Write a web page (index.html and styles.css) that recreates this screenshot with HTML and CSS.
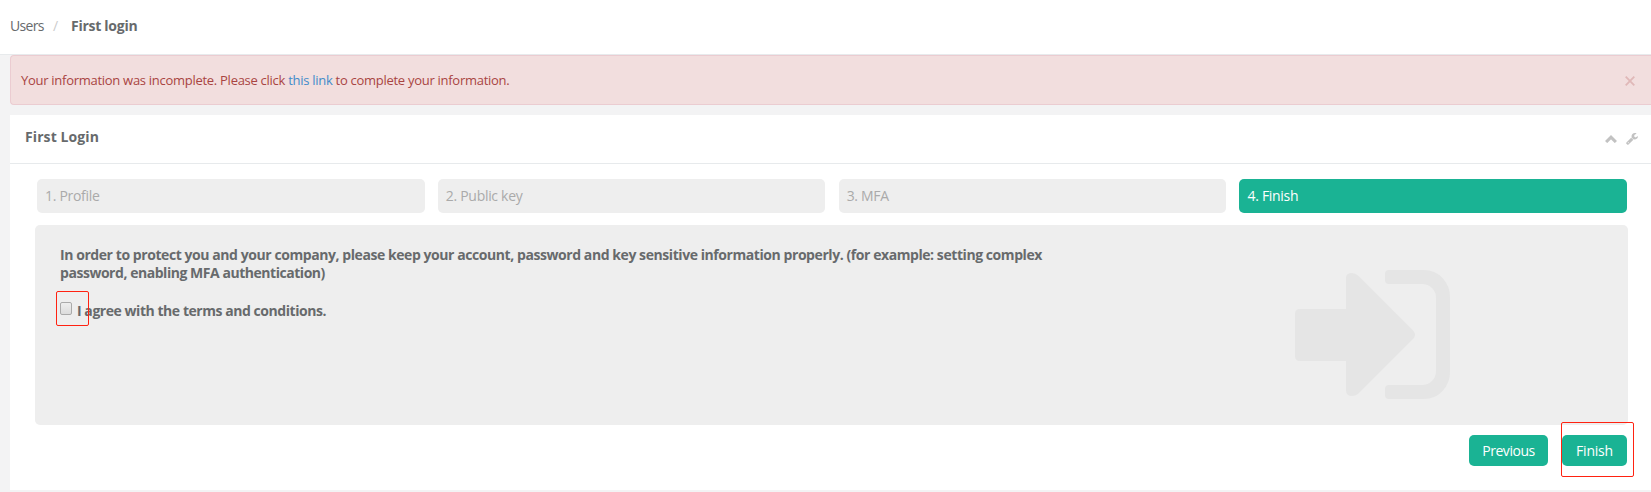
FILE: index.html
```html
<!DOCTYPE html>
<html lang="en">
<head>
<meta charset="utf-8">
<title>First login</title>
<link rel="stylesheet" href="styles.css">
</head>
<body>
<nav class="breadcrumb"><span class="crumb">Users</span><span class="sep">/</span><strong class="current">First login</strong></nav>
<main class="content">
  <div class="alert"><p class="alert-text">Your information was incomplete. Please click <a class="link">this link</a> to complete your information.</p>
    <svg class="close" viewBox="0 0 10 10"><path d="M.7 .7L9.3 9.3M9.3 .7L.7 9.3"/></svg>
  </div>
  <section class="card">
    <header class="card-head">
      <h5 class="card-title">First Login</h5>
      <div class="tools">
        <svg class="chevron" viewBox="0 0 12 8"><path d="M1.100 7L6 2.200L10.900 7"/></svg>
        <svg class="wrench" viewBox="0 0 1664 1664"><path d="M384 1344q0-26-19-45t-45-19-45 19-19 45 19 45 45 19 45-19 19-45zm644-420l-682 682q-37 37-90 37-52 0-91-37L59 1498q-38-36-38-90 0-53 38-91l681-681q39 98 114.500 173.500T1028 924zm634-435q0 39-23 106-47 134-164.500 217.500T1216 896q-185 0-316.500-131.500T768 448t131.500-316.500T1216 0q58 0 121.500 16.500T1445 63q16 11 16 28t-16 28l-293 169v224l193 107q5-3 79-48.500t135.500-81T1630 454q15 0 23.500 10t8.500 25z"/></svg>
      </div>
    </header>
    <div class="card-body">
      <ol class="steps">
        <li class="step">1. Profile</li>
        <li class="step">2. Public key</li>
        <li class="step">3. MFA</li>
        <li class="step active">4. Finish</li>
      </ol>
      <div class="panel">
        <div class="terms">
          <p class="notice"><span class="notice-a">In order to protect you and your company, please keep your account, password and key sensitive information properly. (for example: setting complex</span><br><span class="notice-b">password, enabling MFA authentication)</span></p>
          <label class="agree"><span class="checkbox"></span><span class="agree-text">I agree with the terms and conditions.</span><span class="mark mark-check"></span></label>
        </div>
        <svg class="sign-in" viewBox="0 0 155 129"><path d="M5 39H51V8Q51 3 57 3Q60 3 63 5.500L118 60.500Q122 65 118 69L63 124Q60 126 57 126Q51 126 51 120V91H5Q0 91 0 86V44Q0 39 5 39Z"/><path d="M94 0H129Q140 0 147.500 8Q155 16 155 27V102Q155 113 147.500 121Q140 129 129 129H94Q90 129 90 125V119Q90 115 94 115H127Q133 115 137 111Q141 107 141 101V28Q141 22 137 18Q133 14 127 14H94Q90 14 90 10V4Q90 0 94 0Z"/></svg>
      </div>
      <div class="actions">
        <button class="btn prev">Previous</button>
        <div class="finish-wrap"><button class="btn finish">Finish</button><span class="mark mark-finish"></span></div>
      </div>
    </div>
  </section>
</main>
</body>
</html>
```
FILE: styles.css
```css
* { box-sizing: border-box; }
body { margin: 0; height: 492px; overflow: hidden; background: #f3f3f4; color: #676a6c; font: 14px "Open Sans", "Noto Sans", sans-serif; white-space: nowrap; }
p, h5, ol { margin: 0; padding: 0; }
.breadcrumb { display: flex; height: 55px; padding: 16px 10px 0; line-height: 20px; background: #fff; border-bottom: 1px solid #e7eaec; }
.crumb { width: 43px; letter-spacing: -.65px; }
.sep { width: 18px; color: #ccc; }
.current { letter-spacing: -.27px; }
.content { padding-left: 10px; }
.alert { display: flex; justify-content: space-between; height: 50px; padding: 15px 16px 0 10px; background: #f2dede; border: 1px solid #ebccd1; border-right: 0; border-radius: 4px 0 0 4px; color: #a94442; font-size: 13px; line-height: 19px; letter-spacing: -.28px; }
.link { color: #428bca; }
.close { width: 10px; height: 10px; margin-top: 5px; fill: none; stroke: #e0b8b8; stroke-width: 1.8; }
.card { height: 375px; margin-top: 10px; background: #fff; }
.card-head { display: flex; justify-content: space-between; height: 49px; padding: 12px 13px 0 15px; border-bottom: 1px solid #e7eaec; }
.card-title { font-size: 14px; line-height: 20px; letter-spacing: .1px; }
.tools { display: flex; gap: 9px; padding-top: 6px; }
.chevron { width: 12px; height: 8px; margin-top: 2px; fill: none; stroke: #c2c2c2; stroke-width: 3.1; }
.wrench { width: 12px; height: 12px; fill: #c2c2c2; }
.card-body { padding: 15px 23px 0 25px; }
.steps { display: grid; grid-template-columns: repeat(4, 1fr); gap: 13.3px; list-style: none; padding: 0 1px 0 2px; }
.step { height: 34px; padding-left: 8px; border-radius: 5px; background: #eee; color: #aaa; line-height: 34px; letter-spacing: -.3px; }
.active { background: #1ab394; color: #fff; }
.panel { position: relative; height: 200px; margin-top: 12px; padding: 21px 25px; border-radius: 5px; background: #eee; }
.notice { font-weight: 700; line-height: 18px; letter-spacing: -.43px; }
.notice-b { letter-spacing: -.46px; }
.agree { position: relative; display: flex; align-items: flex-start; width: 300px; margin-top: 20px; font-weight: 700; line-height: 18px; letter-spacing: -.45px; }
.checkbox { width: 12px; height: 13px; margin: 0 5px 0 0; border: 1px solid #aaa; border-radius: 2px; background: linear-gradient(#eee, #dcdcdc); }
.sign-in { position: absolute; left: 1260px; top: 45px; width: 155px; height: 129px; fill: #e5e5e5; }
.mark { position: absolute; border: 1px solid #f21; border-radius: 2px; }
.mark-check { left: -4px; top: -11px; width: 33px; height: 35px; }
.actions { display: flex; justify-content: flex-end; gap: 14px; padding: 10px 1px 0 0; }
.btn { display: block; height: 31px; padding: 0 0 1px; border: 0; border-radius: 5px; background: #1ab394; color: #fff; font: inherit; line-height: 29px; }
.prev { width: 79px; letter-spacing: -.45px; }
.finish { width: 65px; letter-spacing: -.2px; }
.finish-wrap { position: relative; }
.mark-finish { left: -1px; top: -13px; width: 73px; height: 55px; }
```
